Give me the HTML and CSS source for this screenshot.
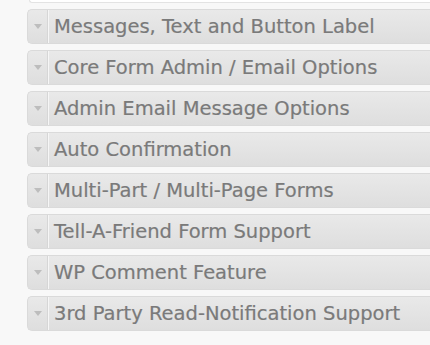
FILE: index.html
```html
<!DOCTYPE html>
<html>
<head>
<meta charset="utf-8">
<link rel="stylesheet" href="styles.css">
</head>
<body>
<div class="top-box"></div>
<ul class="panels">
  <li class="panel"><span class="handle"><span class="tri"></span></span><span class="title">Messages, Text and Button Label</span></li>
  <li class="panel"><span class="handle"><span class="tri"></span></span><span class="title">Core Form Admin / Email Options</span></li>
  <li class="panel"><span class="handle"><span class="tri"></span></span><span class="title">Admin Email Message Options</span></li>
  <li class="panel"><span class="handle"><span class="tri"></span></span><span class="title">Auto Confirmation</span></li>
  <li class="panel"><span class="handle"><span class="tri"></span></span><span class="title">Multi-Part / Multi-Page Forms</span></li>
  <li class="panel"><span class="handle"><span class="tri"></span></span><span class="title">Tell-A-Friend Form Support</span></li>
  <li class="panel"><span class="handle"><span class="tri"></span></span><span class="title">WP Comment Feature</span></li>
  <li class="panel"><span class="handle"><span class="tri"></span></span><span class="title">3rd Party Read-Notification Support</span></li>
</ul>
</body>
</html>
```
FILE: styles.css
```css
html, body {
  margin: 0;
  padding: 0;
  background: #f8f8f8;
  overflow: hidden;
}
.top-box {
  margin-left: 29px;
  height: 2px;
  background: #fff;
  border: 1px solid #e3e3e3;
  border-top: none;
  border-right: none;
  border-radius: 0 0 0 4px;
}
.panels {
  list-style: none;
  margin: 6px 0 0 0;
  padding: 0 0 0 27px;
}
.panel {
  display: flex;
  align-items: stretch;
  height: 33px;
  margin-bottom: 6px;
  border: 1px solid #dadada;
  border-right: none;
  border-radius: 5px 0 0 5px;
  background: linear-gradient(#e9e9e9, #dedede);
  white-space: nowrap;
}
.handle {
  width: 19px;
  flex: none;
  display: flex;
  align-items: center;
  justify-content: center;
  border-right: 1px solid #d6d6d6;
  box-shadow: 1px 0 0 #f6f6f6;
}
.tri {
  width: 0;
  height: 0;
  border-left: 4px solid transparent;
  border-right: 4px solid transparent;
  border-top: 5px solid #bdbdbd;
}
.title {
  padding-left: 6px;
  font-family: "DejaVu Sans", sans-serif;
  font-size: 19.5px;
  line-height: 33px;
  color: #7a7a7a;
  -webkit-text-stroke: 0.2px #7a7a7a;
}
```
